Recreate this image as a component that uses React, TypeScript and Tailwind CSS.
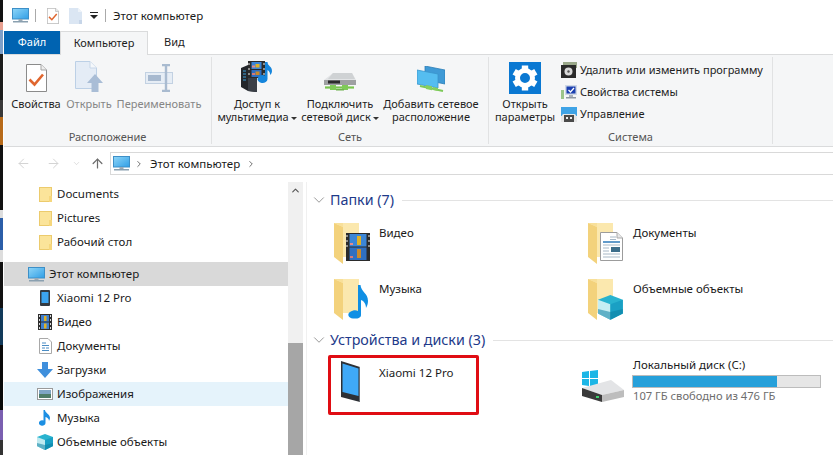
import { ChevronDown, ChevronRight, ChevronUp, ArrowLeft, ArrowRight, ArrowUp } from "lucide-react";
import type { ReactNode } from "react";

const MonitorIcon = () => (
  <svg width="17" height="15" viewBox="0 0 17 15">
    <defs>
      <linearGradient id="scr" x1="0" y1="0" x2="1" y2="1">
        <stop offset="0" stopColor="#8fd6f8" />
        <stop offset="1" stopColor="#2f9ee6" />
      </linearGradient>
    </defs>
    <rect x="0.5" y="0.5" width="16" height="10.5" fill="url(#scr)" stroke="#3d8fc7" />
    <rect x="6.5" y="11" width="4" height="2" fill="#9aa9b5" />
    <rect x="1" y="13" width="15" height="1.5" fill="#8aa0b0" />
  </svg>
);

const CheckDoc = ({ w = 21, h = 28 }: { w?: number; h?: number }) => (
  <svg width={w} height={h} viewBox="0 0 21 28">
    <path d="M.5.5H15L20.5 6V27.5H.5Z" fill="#fff" stroke="#8b8b8b" />
    <path d="M15 .5V6H20.5" fill="#eee" stroke="#a5a5a5" />
    <path d="M3.5 15.5 8.5 20.5 17 10.5" fill="none" stroke="#e0662f" strokeWidth="2.6" />
  </svg>
);

const BlankDoc = ({ w = 13, h = 16 }: { w?: number; h?: number }) => (
  <svg width={w} height={h} viewBox="0 0 13 16">
    <path d="M0 0H9L13 4V16H0Z" fill="#dbe6f3" />
    <path d="M9 0V4H13" fill="#eef3f9" />
    <path d="M10 12h3v4h-3z" fill="#c6d5e8" />
  </svg>
);

const OpenIcon = () => (
  <svg width="28" height="31" viewBox="0 0 28 31">
    <path d="M.5.5H15L21.5 7V27.5H.5Z" fill="#e4ecf6" stroke="#bcd0e6" />
    <path d="M15 .5V7H21.5" fill="#f5f8fb" stroke="#c7d6e8" />
    <path d="M20 13 28 22H23.5V31H16.5V22H12Z" fill="#a9bdd6" />
  </svg>
);

const RenameIcon = () => (
  <svg width="29" height="28" viewBox="0 0 29 28">
    <rect x="0.5" y="8.5" width="27" height="11" fill="#e6edf5" stroke="#c2d1e2" />
    <rect x="3" y="11" width="13" height="6" fill="#a7b9cf" />
    <path d="M17 1h8M17 27h8M21 1v26" stroke="#a9bbd0" strokeWidth="2.4" fill="none" />
  </svg>
);

const FilmFrames = ({ x, y, w, h }: { x: number; y: number; w: number; h: number }) => (
  <g>
    <rect x={x} y={y} width={w} height={h} fill="#2b2b2b" />
    <rect x={x + 3.5} y={y + 1} width={w - 7} height={h / 2 - 1.5} fill="#3c86d6" />
    <rect x={x + 3.5} y={y + h / 2 + 0.5} width={w - 7} height={h / 2 - 1.5} fill="#2f6fc0" />
    <rect x={x + w / 2 - 1} y={y + 3} width={4} height={h / 2 - 5} fill="#e0b126" />
    <rect x={x + w / 2 - 1} y={y + h / 2 + 2} width={4} height={h / 2 - 5} fill="#c98a2a" />
    <rect x={x + 4} y={y + h / 2 - 4} width={3} height={2} fill="#e88a8a" />
    <rect x={x + 4} y={y + h - 5} width={3} height={2} fill="#d27979" />
    <path
      d={`M${x + 1} ${y + 2}v2M${x + 1} ${y + 7}v2M${x + 1} ${y + 12}v2M${x + w - 1} ${y + 2}v2M${x + w - 1} ${y + 7}v2M${x + w - 1} ${y + 12}v2`}
      stroke="#cfcfcf"
      strokeWidth="1.2"
    />
  </g>
);

const MediaIcon = () => (
  <svg width="32" height="31" viewBox="0 0 32 31">
    <path d="M0 7 7 4 16 8V31L7 30 0 26Z" fill="#23262b" />
    <path d="M7 5V30L16 31V8Z" fill="#3a3f47" />
    <path d="M2 10h3M2 13h3M2 16h3M2 19h3" stroke="#3ca0dc" strokeWidth="1" />
    <FilmFrames x={7} y={0} w={17} h={17} />
    <path d="M24 1h2.5c0 4 4.5 4 4.5 9 0 2-1 3-2 4 .3-2-.5-4-2.5-5V18a5 4 0 1 1-2.500-3.400Z" fill="#1585dc" />
  </svg>
);

const NetDriveIcon = () => (
  <svg width="32" height="20" viewBox="0 0 32 20">
    <path d="M0 8 9 1H28L32 8V13H0Z" fill="#e2e4e6" />
    <path d="M9 1H28L31 7H4Z" fill="#cfd2d4" />
    <path d="M0 8H32V13H0Z" fill="#9ea0a2" />
    <rect x="4" y="8.500" width="12" height="3" fill="#2c2c2c" />
    <path d="M1 15.500H30" stroke="#79c44f" strokeWidth="2.200" />
    <path d="M6 13h6v5H6zM18 13h6v5h-6z" fill="#7fca58" />
    <rect x="12" y="17" width="8" height="1.500" fill="#6fb24e" />
  </svg>
);

const NetLocationIcon = () => (
  <svg width="28" height="26" viewBox="0 0 28 26">
    <path d="M8 0 28 4V18L8 14Z" fill="#3f9ad6" stroke="#2d7fb8" strokeWidth=".8" />
    <path d="M0 4 21 8V22L0 18Z" fill="#55bdf0" stroke="#3a94cc" strokeWidth=".8" />
    <path d="M3 20 26 25" stroke="#7cc958" strokeWidth="2" />
    <path d="M9 19l6 1.300v4L9 23ZM16 21l5 1v3l-5-1Z" fill="#86cf60" />
  </svg>
);

const GearTile = () => (
  <div className="-mb-[2px] flex h-8 w-8 items-center justify-center bg-[#0a78d2]">
    <svg width="26" height="26" viewBox="0 0 26 26">
      {[0, 60, 120, 180, 240, 300].map((a) => (
        <rect key={a} x="9.800" y="0.500" width="6.400" height="6" fill="#fff" transform={`rotate(${a} 13 13)`} />
      ))}
      <circle cx="13" cy="13" r="7.500" fill="none" stroke="#fff" strokeWidth="5" />
    </svg>
  </div>
);

const UninstallIcon = () => (
  <svg width="16" height="16" viewBox="0 0 16 16">
    <rect x="2" y="0" width="14" height="6" fill="#9aa88a" />
    <rect x="0" y="3" width="15" height="13" fill="#2a2a2a" />
    <circle cx="7.500" cy="9.500" r="4" fill="#d9d9d9" />
    <circle cx="7.500" cy="9.500" r="1.200" fill="#555" />
  </svg>
);

const SysPropsIcon = () => (
  <svg width="16" height="15" viewBox="0 0 16 15">
    <rect x="0" y="5" width="3" height="9" fill="#9cc48a" />
    <rect x="4" y="0" width="12" height="10" fill="#cfd8e6" />
    <rect x="5.500" y="1.500" width="9" height="7" fill="#1b3fb0" />
    <path d="M7.500 5 9.500 7 13 3" stroke="#fff" strokeWidth="1.300" fill="none" />
    <rect x="8" y="10" width="4" height="2" fill="#aab2bc" />
    <rect x="5" y="12" width="10" height="1.500" fill="#8f98a3" />
  </svg>
);

const ManageIcon = () => (
  <svg width="16" height="15" viewBox="0 0 16 15">
    <rect x="0" y="0" width="16" height="9" fill="#3ea3e6" />
    <path d="M2 7h12l2 3v5H0v-5Z" fill="#e6e6e6" />
    <rect x="3" y="8" width="10" height="7" fill="#4a4a4a" />
    <rect x="5" y="10" width="2" height="2" fill="#eee" />
    <rect x="9" y="10" width="2" height="2" fill="#eee" />
  </svg>
);

const SmallFolder = () => (
  <svg width="13" height="15" viewBox="0 0 13 15">
    <rect x=".5" y=".5" width="12" height="14" fill="#fbe49a" stroke="#eccb6d" />
    <rect x="10" y="9" width="3" height="6" fill="#f6d77d" />
  </svg>
);

const PhoneSmall = () => (
  <svg width="10" height="16" viewBox="0 0 10 16">
    <rect x="0" y="0" width="10" height="16" rx="1" fill="#333a42" />
    <rect x="1.500" y="2" width="7" height="11" fill="#3ba4f0" />
  </svg>
);

const FilmSmall = () => (
  <svg width="14" height="16" viewBox="0 0 14 16">
    <rect width="14" height="16" fill="#2e2e2e" />
    <rect x="3" y="1" width="8" height="6.500" fill="#3f7fcf" />
    <rect x="3" y="8.500" width="8" height="6.500" fill="#3f7fcf" />
    <rect x="6" y="2" width="2.500" height="5" fill="#e0b126" />
    <rect x="6" y="9.500" width="2.500" height="5" fill="#e0b126" />
    <path d="M1.500 1v2M1.500 5v2M1.500 9v2M1.500 13v2M12.500 1v2M12.500 5v2M12.500 9v2M12.500 13v2" stroke="#ddd" />
  </svg>
);

const DocSmall = () => (
  <svg width="13" height="16" viewBox="0 0 13 16">
    <path d="M.5.500H9L12.500 4V15.500H.5Z" fill="#fff" stroke="#a8a8a8" />
    <path d="M3 5h4M3 7.500h7M3 10h3M7 10h3M3 12.500h7" stroke="#4a8cc4" />
  </svg>
);

const DownArrowSmall = () => (
  <svg width="16" height="16" viewBox="0 0 16 16">
    <path d="M5 0H11V7H16L8 16 0 7H5Z" fill="#3f8fdc" />
  </svg>
);

const ImageSmall = () => (
  <svg width="16" height="12" viewBox="0 0 16 12">
    <rect x=".5" y=".5" width="15" height="11" fill="#fff" stroke="#9a9a9a" />
    <rect x="2" y="2" width="12" height="4" fill="#7fa5c4" />
    <rect x="2" y="6" width="12" height="4" fill="#4f7d68" />
  </svg>
);

const NoteSmall = () => (
  <svg width="12" height="16" viewBox="0 0 12 16">
    <path d="M4.500 0H6c0 3 5 4 5 8 0 1-.5 2-1 3 0-2-1.500-3.500-3.500-4V13a3.300 2.800 0 1 1-2-2.600Z" fill="#1c8fe3" />
  </svg>
);

const CubeIcon = ({ s = 16 }: { s?: number }) => (
  <svg width={s} height={s} viewBox="0 0 16 16">
    <path d="M8 0 16 3V12L8 16 0 12V3Z" fill="#29b3cf" />
    <path d="M0 3 8 6V16L0 12Z" fill="#bfeaf0" />
    <path d="M8 6 16 3V12L8 16Z" fill="#1aa0c4" />
    <path d="M8 11 16 9V12L8 16 0 12V9Z" fill="#0d7fa3" opacity=".55" />
  </svg>
);

const BigFolder = ({ children }: { children?: ReactNode }) => (
  <svg width="40" height="42" viewBox="0 0 40 42">
    <rect x="1" y="0" width="25" height="34" fill="#fbe8ae" />
    <path d="M1 0 10 4V41L1 34Z" fill="#f3d27c" />
    <path d="M10 4 1 0H10Z" fill="#f8e09a" />
    {children}
  </svg>
);

const MusicOverlay = () => (
  <path
    d="M25 6H27.500C28 13 35 14 35 22 35 25 34 27 33 29 33 25 31 22 28 21V36C28 39 24 40 20 39.500 15 39 14 35 17 33 20 31 23 31 25 32Z"
    fill="#0f8fe4"
  />
);

const DocOverlay = () => (
  <g>
    <path d="M13.500 9.500H30L35.500 15V37.500H13.500Z" fill="#fff" stroke="#9c9c9c" />
    <path d="M30 9.500V15H35.500" fill="#e8e8e8" stroke="#aaa" />
    <path d="M16 19H33" stroke="#2d78b8" strokeWidth="1.500" />
    <path d="M23 14h6M23 16.500h6M16 22h17M16 25h6M16 28h6M16 31h17M16 34h17" stroke="#a8b8c6" />
    <rect x="24" y="24" width="9" height="5" fill="#3c6d8a" />
  </g>
);

const Caret = () => (
  <svg width="6" height="3" viewBox="0 0 6 3" className="ml-[2px] inline-block align-middle">
    <path d="M0 0H6L3 3Z" fill="#333" />
  </svg>
);

const BigButton = ({
  icon,
  width,
  disabled,
  children,
}: {
  icon: ReactNode;
  width: string;
  disabled?: boolean;
  children: ReactNode;
}) => (
  <div className={`flex flex-col items-center ${width}`}>
    <div className="flex h-[40px] items-end pb-[5px]">{icon}</div>
    <div className={`text-center text-[11px] leading-[13px] whitespace-nowrap ${disabled ? "text-[#868686]" : "text-[#1e1e1e]"}`}>
      {children}
    </div>
  </div>
);

const SmallAction = ({ icon, label }: { icon: ReactNode; label: string }) => (
  <div className="flex h-[22px] items-center">
    <div className="flex w-[19px] justify-start">{icon}</div>
    <span className="text-[11px] text-[#1e1e1e]">{label}</span>
  </div>
);

const RibbonGroup = ({ label, width, children }: { label: string; width: string; children: ReactNode }) => (
  <div className={`flex flex-col border-r border-[#e1e2e3] ${width} my-[2px]`}>
    <div className="flex flex-1 pl-[6px]">{children}</div>
    <div className="text-center text-[11px] leading-[14px] text-[#555]">{label}</div>
  </div>
);

const TreeRow = ({ icon, label, hover }: { icon: ReactNode; label: string; hover?: boolean }) => (
  <div className={`flex h-6 items-center pl-[32px] ${hover ? "bg-[#e5f3fb]" : ""}`}>
    <div className="flex w-[21px] justify-center pr-[3px]">{icon}</div>
    <span className="text-[11.5px] text-[#1a1a1a]">{label}</span>
  </div>
);

const SectionHead = ({ label }: { label: string }) => (
  <div className="flex h-5 items-center pl-[3px]">
    <ChevronDown size={18} strokeWidth={0.8} className="text-[#555]" />
    <span className="mr-[8px] ml-[2px] text-[14.3px] whitespace-nowrap text-[#1e3a8a]">{label}</span>
    <div className="h-px flex-1 bg-[#e3e3e3]" />
  </div>
);

const FolderItem = ({ icon, label }: { icon: ReactNode; label: string }) => (
  <div className="flex h-14">
    <div className="w-[46px] pt-[5px]">{icon}</div>
    <div className="pt-[6px] text-[11.5px] text-[#1a1a1a]">{label}</div>
  </div>
);

export default function App() {
  return (
    <div className="flex h-[455px] w-[833px] overflow-hidden bg-white font-['Noto_Sans',sans-serif]">
      {/* кусок обоев слева */}
      <div className="flex w-[3px] flex-col">
        <div className="h-[22px] bg-[#111]" />
        <div className="h-[8px] bg-[#e8a090]" />
        <div className="h-[24px] bg-[#7d9fc8]" />
        <div className="h-[46px] bg-[#1c1c1c]" />
        <div className="h-[17px] bg-[#3a3a3a]" />
        <div className="h-[28px] bg-[#b86b1a]" />
        <div className="h-[65px] bg-[#111]" />
        <div className="h-[8px] bg-[#ddd]" />
        <div className="h-[32px] bg-[#2b5ea8]" />
        <div className="h-[12px] bg-[#ddd]" />
        <div className="h-[46px] bg-[#111]" />
        <div className="h-[37px] bg-[#123a5a]" />
        <div className="h-[65px] bg-[#0a0a0a]" />
        <div className="h-[30px] bg-[#7a5fb0]" />
        <div className="flex-1 bg-[#333]" />
      </div>

      <div className="flex min-w-0 flex-1 flex-col pl-px">
        {/* заголовок */}
        <div className="flex h-[31px] items-center pl-[8px]">
          <MonitorIcon />
          <div className="mx-[6px] h-[13px] w-px bg-[#aaa]" />
          <div className="ml-[5px]">
            <CheckDoc w={12} h={16} />
          </div>
          <div className="ml-[10px]">
            <BlankDoc />
          </div>
          <svg width="8" height="8" viewBox="0 0 8 8" className="ml-[8px]">
            <path d="M0 0H8V1H0ZM0 3H8L4 7Z" fill="#222" />
          </svg>
          <div className="mx-[7px] h-[13px] w-px bg-[#aaa]" />
          <span className="text-[11.5px] text-[#1a1a1a]">Этот компьютер</span>
        </div>

        {/* вкладки */}
        <div className="flex h-[23px]">
          <div className="flex w-[56px] items-center justify-center bg-[#0063b1] text-[11px] text-white">Файл</div>
          <div className="z-10 -mb-px flex w-[88px] items-center justify-center border-x border-t border-[#dadbdc] bg-[#f5f6f7] text-[11px] text-[#1e1e1e]">
            Компьютер
          </div>
          <div className="ml-[16px] flex items-center text-[11px] text-[#1e1e1e]">Вид</div>
        </div>

        {/* лента */}
        <div className="flex h-[93px] border-y border-[#dadbdc] bg-[#f5f6f7]">
          <RibbonGroup label="Расположение" width="w-[208px]">
            <BigButton icon={<CheckDoc />} width="w-[52px]">Свойства</BigButton>
            <BigButton icon={<OpenIcon />} width="ml-[2px] w-[50px]" disabled>Открыть</BigButton>
            <BigButton icon={<RenameIcon />} width="ml-[2px] w-[86px]" disabled>Переименовать</BigButton>
          </RibbonGroup>
          <RibbonGroup label="Сеть" width="w-[277px]">
            <BigButton icon={<MediaIcon />} width="w-[78px]">
              Доступ к
              <br />
              мультимедиа
              <Caret />
            </BigButton>
            <BigButton icon={<NetDriveIcon />} width="ml-[7px] w-[74px]">
              Подключить
              <br />
              сетевой диск
              <Caret />
            </BigButton>
            <BigButton icon={<NetLocationIcon />} width="ml-[6px] w-[96px]">
              Добавить сетевое
              <br />
              расположение
            </BigButton>
          </RibbonGroup>
          <RibbonGroup label="Система" width="w-[284px]">
            <BigButton icon={<GearTile />} width="w-[60px]">
              Открыть
              <br />
              параметры
            </BigButton>
            <div className="ml-[6px] pt-[2px]">
              <SmallAction icon={<UninstallIcon />} label="Удалить или изменить программу" />
              <SmallAction icon={<SysPropsIcon />} label="Свойства системы" />
              <SmallAction icon={<ManageIcon />} label="Управление" />
            </div>
          </RibbonGroup>
        </div>

        {/* адресная строка */}
        <div className="flex h-[35px] items-start pt-[5px]">
          <div className="flex h-[23px] w-[106px] items-center pl-[12px]">
            <ArrowLeft size={15} strokeWidth={1.6} className="text-[#d4d4d4]" />
            <ArrowRight size={15} strokeWidth={1.6} className="ml-[15px] text-[#d4d4d4]" />
            <ChevronDown size={9} strokeWidth={1.5} className="ml-[11px] text-[#c8c8c8]" />
            <ArrowUp size={15} strokeWidth={2} className="ml-[9px] text-[#6d6d6d]" />
          </div>
          <div className="flex h-[23px] flex-1 items-center border border-r-0 border-[#d9d9d9] pl-[2px]">
            <MonitorIcon />
            <ChevronRight size={10} strokeWidth={2} className="ml-[4px] text-[#555]" />
            <span className="ml-[6px] text-[11.5px] text-[#1a1a1a]">Этот компьютер</span>
            <ChevronRight size={10} strokeWidth={2} className="ml-[6px] text-[#555]" />
          </div>
        </div>

        {/* основная часть */}
        <div className="flex min-h-0 flex-1">
          <div className="w-[284px] shrink-0 overflow-hidden">
            <TreeRow icon={<SmallFolder />} label="Documents" />
            <TreeRow icon={<SmallFolder />} label="Pictures" />
            <TreeRow icon={<SmallFolder />} label="Рабочий стол" />
            <div className="mt-[8px] flex h-6 items-center bg-[#d9d9d9] pl-[24px]">
              <MonitorIcon />
              <span className="ml-[4px] text-[11.5px] text-[#1a1a1a]">Этот компьютер</span>
            </div>
            <TreeRow icon={<PhoneSmall />} label="Xiaomi 12 Pro" />
            <TreeRow icon={<FilmSmall />} label="Видео" />
            <TreeRow icon={<DocSmall />} label="Документы" />
            <TreeRow icon={<DownArrowSmall />} label="Загрузки" />
            <TreeRow icon={<ImageSmall />} label="Изображения" hover />
            <TreeRow icon={<NoteSmall />} label="Музыка" />
            <TreeRow icon={<CubeIcon />} label="Объемные объекты" />
          </div>

          {/* скроллбар */}
          <div className="flex w-[15px] shrink-0 flex-col bg-[#f0f0f0]">
            <div className="flex h-[17px] items-center justify-center">
              <ChevronUp size={11} strokeWidth={2.5} className="text-[#555]" />
            </div>
            <div className="mt-[144px] flex-1 bg-[#a6a6a6]" />
          </div>

          <div className="ml-[3px] flex-1 border-l border-[#f0f0f0] pt-[8px]">
            <SectionHead label="Папки (7)" />
            <div className="ml-[26px] grid grid-cols-[254px_255px] pt-[8px]">
              <FolderItem
                label="Видео"
                icon={
                  <BigFolder>
                    <FilmFrames x={13} y={10} w={24} h={28} />
                  </BigFolder>
                }
              />
              <FolderItem
                label="Документы"
                icon={
                  <BigFolder>
                    <DocOverlay />
                  </BigFolder>
                }
              />
              <FolderItem
                label="Музыка"
                icon={
                  <BigFolder>
                    <MusicOverlay />
                  </BigFolder>
                }
              />
              <FolderItem
                label="Объемные объекты"
                icon={
                  <BigFolder>
                    <g transform="translate(11 16) scale(1.55)">
                      <path d="M8 0 16 3V12L8 16 0 12V3Z" fill="#29b3cf" />
                      <path d="M0 3 8 6V16L0 12Z" fill="#c6eef3" />
                      <path d="M8 6 16 3V12L8 16Z" fill="#1aa0c4" />
                      <path d="M8 11 16 9V12L8 16 0 12V9Z" fill="#0d7fa3" opacity=".55" />
                    </g>
                  </BigFolder>
                }
              />
            </div>

            <SectionHead label="Устройства и диски (3)" />
            <div className="ml-[26px] grid grid-cols-[254px_255px]">
              <div className="relative flex h-[70px]">
                <div className="w-[46px] pl-[8px] pt-[11px]">
                  <svg width="19" height="42" viewBox="0 0 19 42">
                    <path d="M0 0 19 6V41L0 36Z" fill="#2d3035" />
                    <path d="M1.500 2.500 17.500 7.500V35L1.500 31Z" fill="#3fa9f7" />
                    <path d="M18 6 19 6V41L18 41Z" fill="#6b6f75" />
                  </svg>
                </div>
                <div className="pt-[14px] text-[11.5px] text-[#1a1a1a]">Xiaomi 12 Pro</div>
                <div className="absolute -left-[5px] top-[5px] h-[60px] w-[151px] rounded-[2px] border-[3px] border-[#e00d13]" />
              </div>
              <div className="flex h-[70px]">
                <div className="-ml-[5px] w-[51px] pt-[20px]">
                  <svg width="42" height="33" viewBox="0 0 42 33">
                    <path d="M0 2 7 1V8H0ZM8 1 16 0V8H8ZM0 9H7V16L0 15ZM8 9H16V17L8 16Z" fill="#1cb6e6" />
                    <path d="M0 18 29 10 42 20 20 25Z" fill="#e3e4e6" />
                    <path d="M0 18 20 25V32L0 26Z" fill="#3a3a3a" />
                    <path d="M20 25 42 20V27L20 32Z" fill="#bdbdbd" />
                    <rect x="14" y="26" width="3" height="2" fill="#3fd06e" />
                  </svg>
                </div>
                <div className="w-[189px] pt-[6px]">
                  <div className="text-[11.5px] leading-[17px] text-[#1a1a1a]">Локальный диск (C:)</div>
                  <div className="mt-[2px] -ml-px h-[13px] w-[189px] border border-[#bcbcbc] bg-[#e6e6e6]">
                    <div className="h-full w-[77%] bg-[#26a0da]" />
                  </div>
                  <div className="text-[11.2px] leading-[16px] text-[#6d6d6d]">107 ГБ свободно из 476 ГБ</div>
                </div>
              </div>
            </div>
          </div>
        </div>
      </div>
    </div>
  );
}
